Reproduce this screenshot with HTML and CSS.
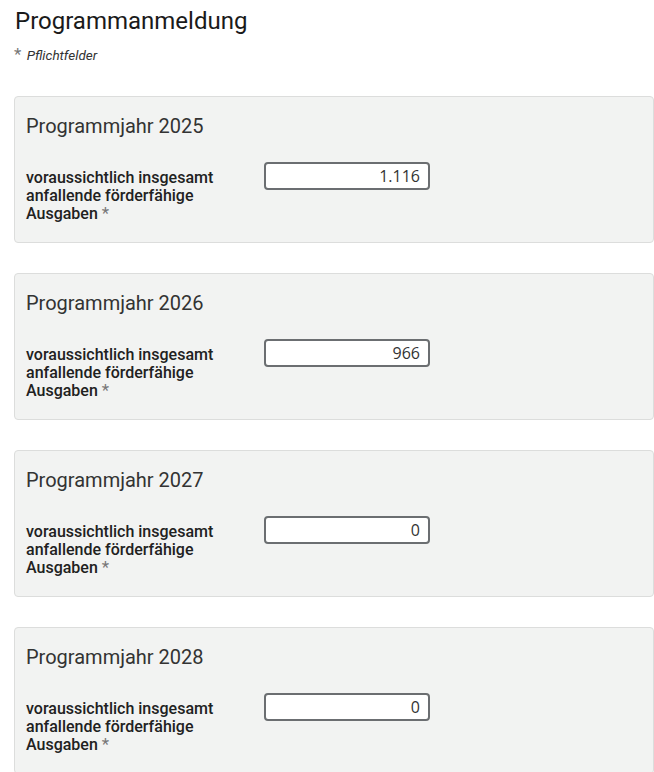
FILE: index.html
```html
<!DOCTYPE html>
<html lang="de">
<head>
  <meta charset="UTF-8" />
  <meta name="viewport" content="width=device-width, initial-scale=1" />
  <title>Programmanmeldung</title>
  <link rel="stylesheet" href="styles.css">
</head>
<body>
  <div class="page">
    <h1>Programmanmeldung</h1>
    <p class="hint"><span class="req">*</span> Pflichtfelder</p>

    <section class="year-box">
      <h2>Programmjahr 2025</h2>
      <div class="row">
        <label for="y2025">voraussichtlich insgesamt anfallende förderfähige Ausgaben <span class="req">*</span></label>
        <input type="text" id="y2025" value="1.116" />
      </div>
    </section>

    <section class="year-box">
      <h2>Programmjahr 2026</h2>
      <div class="row">
        <label for="y2026">voraussichtlich insgesamt anfallende förderfähige Ausgaben <span class="req">*</span></label>
        <input type="text" id="y2026" value="966" />
      </div>
    </section>

    <section class="year-box">
      <h2>Programmjahr 2027</h2>
      <div class="row">
        <label for="y2027">voraussichtlich insgesamt anfallende förderfähige Ausgaben <span class="req">*</span></label>
        <input type="text" id="y2027" value="0" />
      </div>
    </section>

    <section class="year-box">
      <h2>Programmjahr 2028</h2>
      <div class="row">
        <label for="y2028">voraussichtlich insgesamt anfallende förderfähige Ausgaben <span class="req">*</span></label>
        <input type="text" id="y2028" value="0" />
      </div>
    </section>
  </div>
</body>
</html>
```

FILE: styles.css
```css
* {
  box-sizing: border-box;
}
body {
  margin: 0;
  font-family: Roboto, 'Liberation Sans', sans-serif;
  background: #fff;
  color: #212121;
}

.page {
  padding: 6px 0 0 14px;
}

h1 {
  margin: 0 0 0 1px;
  font-size: 24px;
  font-weight: 400;
  line-height: 30px;
  color: #1a1a1a;
}

.hint {
  margin: 10px 0 32px 0;
  font-size: 13.5px;
  font-style: italic;
  line-height: 18px;
  color: #333;
}

.hint .req {
  margin-right: 2px;
}

.req {
  color: #777;
  font-style: normal;
  font-weight: 400;
  font-size: 17px;
  line-height: 1;
}

.year-box {
  width: 640px;
  margin-bottom: 30px;
  padding: 14px 11px 19px 11px;
  background: #f2f3f2;
  border: 1px solid #dcdddc;
  border-radius: 4px;
}

.year-box h2 {
  margin: 0 0 21px 0;
  font-size: 20px;
  font-weight: 400;
  line-height: 30px;
  color: #333;
}

.row {
  display: flex;
  align-items: flex-start;
  gap: 18px;
}

.row label {
  flex: 0 0 220px;
  padding-top: 7px;
  font-size: 16px;
  font-weight: 500;
  line-height: 18px;
}

.row input {
  width: 166px;
  height: 28px;
  padding: 0 8px;
  border: 2px solid #6b6e71;
  border-radius: 4px;
  background: #fff;
  font-family: 'Open Sans', sans-serif;
  font-size: 16px;
  color: #333;
  text-align: right;
  outline: none;
}
```
